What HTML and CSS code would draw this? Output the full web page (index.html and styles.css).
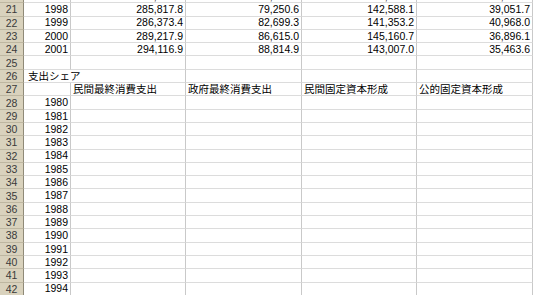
FILE: index.html
```html
<!DOCTYPE html>
<html lang="ja">
<head>
<meta charset="utf-8">
<link rel="stylesheet" href="styles.css">
</head>
<body>
<div class="viewport">
  <div class="sheet">
    <div class="rh">20</div><div class="c num">1997</div><div class="c num">280,726.9</div><div class="c num">77,906.6</div><div class="c num">144,380.0</div><div class="c num">37,122.7</div>
    <div class="rh">21</div><div class="c num">1998</div><div class="c num">285,817.8</div><div class="c num">79,250.6</div><div class="c num">142,588.1</div><div class="c num">39,051.7</div>
    <div class="rh">22</div><div class="c num">1999</div><div class="c num">286,373.4</div><div class="c num">82,699.3</div><div class="c num">141,353.2</div><div class="c num">40,968.0</div>
    <div class="rh">23</div><div class="c num">2000</div><div class="c num">289,217.9</div><div class="c num">86,615.0</div><div class="c num">145,160.7</div><div class="c num">36,896.1</div>
    <div class="rh">24</div><div class="c num">2001</div><div class="c num">294,116.9</div><div class="c num">88,814.9</div><div class="c num">143,007.0</div><div class="c num">35,463.6</div>
    <div class="rh">25</div><div class="c"></div><div class="c"></div><div class="c"></div><div class="c"></div><div class="c"></div>
    <div class="rh">26</div><div class="c span txt">支出シェア</div><div class="c"></div><div class="c"></div><div class="c"></div>
    <div class="rh">27</div><div class="c"></div><div class="c txt">民間最終消費支出</div><div class="c txt">政府最終消費支出</div><div class="c txt">民間固定資本形成</div><div class="c txt">公的固定資本形成</div>
    <div class="rh">28</div><div class="c num">1980</div><div class="c"></div><div class="c"></div><div class="c"></div><div class="c"></div>
    <div class="rh">29</div><div class="c num">1981</div><div class="c"></div><div class="c"></div><div class="c"></div><div class="c"></div>
    <div class="rh">30</div><div class="c num">1982</div><div class="c"></div><div class="c"></div><div class="c"></div><div class="c"></div>
    <div class="rh">31</div><div class="c num">1983</div><div class="c"></div><div class="c"></div><div class="c"></div><div class="c"></div>
    <div class="rh">32</div><div class="c num">1984</div><div class="c"></div><div class="c"></div><div class="c"></div><div class="c"></div>
    <div class="rh">33</div><div class="c num">1985</div><div class="c"></div><div class="c"></div><div class="c"></div><div class="c"></div>
    <div class="rh">34</div><div class="c num">1986</div><div class="c"></div><div class="c"></div><div class="c"></div><div class="c"></div>
    <div class="rh">35</div><div class="c num">1987</div><div class="c"></div><div class="c"></div><div class="c"></div><div class="c"></div>
    <div class="rh">36</div><div class="c num">1988</div><div class="c"></div><div class="c"></div><div class="c"></div><div class="c"></div>
    <div class="rh">37</div><div class="c num">1989</div><div class="c"></div><div class="c"></div><div class="c"></div><div class="c"></div>
    <div class="rh">38</div><div class="c num">1990</div><div class="c"></div><div class="c"></div><div class="c"></div><div class="c"></div>
    <div class="rh">39</div><div class="c num">1991</div><div class="c"></div><div class="c"></div><div class="c"></div><div class="c"></div>
    <div class="rh">40</div><div class="c num">1992</div><div class="c"></div><div class="c"></div><div class="c"></div><div class="c"></div>
    <div class="rh">41</div><div class="c num">1993</div><div class="c"></div><div class="c"></div><div class="c"></div><div class="c"></div>
    <div class="rh">42</div><div class="c num">1994</div><div class="c"></div><div class="c"></div><div class="c"></div><div class="c"></div>
  </div>
</div>
</body>
</html>
```

FILE: styles.css
```css
html, body {
  margin: 0;
  padding: 0;
  background: #ffffff;
}
.viewport {
  width: 533px;
  height: 295px;
  overflow: hidden;
}
.sheet {
  display: grid;
  grid-template-columns: 24px 47px 115px 116px 115px 116px;
  grid-auto-rows: 13.3px;
  margin-top: -10px;
  font-family: "Liberation Sans", "Noto Sans CJK JP", sans-serif;
  font-size: 10.5px;
  color: #000;
}
.rh {
  background: #d9d2bd;
  border-right: 1px solid #8f8a78;
  border-bottom: 1px solid #beb7a1;
  color: #3a3a3a;
  font-size: 10.5px;
  display: flex;
  align-items: center;
  justify-content: center;
  box-sizing: border-box;
}
.c {
  border-right: 1px solid #c9c9c9;
  border-bottom: 1px solid #dcdcdc;
  box-sizing: border-box;
  display: flex;
  align-items: center;
  white-space: nowrap;
  overflow: hidden;
  line-height: 1;
}
.num {
  justify-content: flex-end;
  padding-right: 2px;
}
.txt {
  padding-left: 2px;
  font-family: "Noto Sans CJK JP", sans-serif;
}
.span {
  grid-column: span 2;
  padding-left: 4px;
}
```
